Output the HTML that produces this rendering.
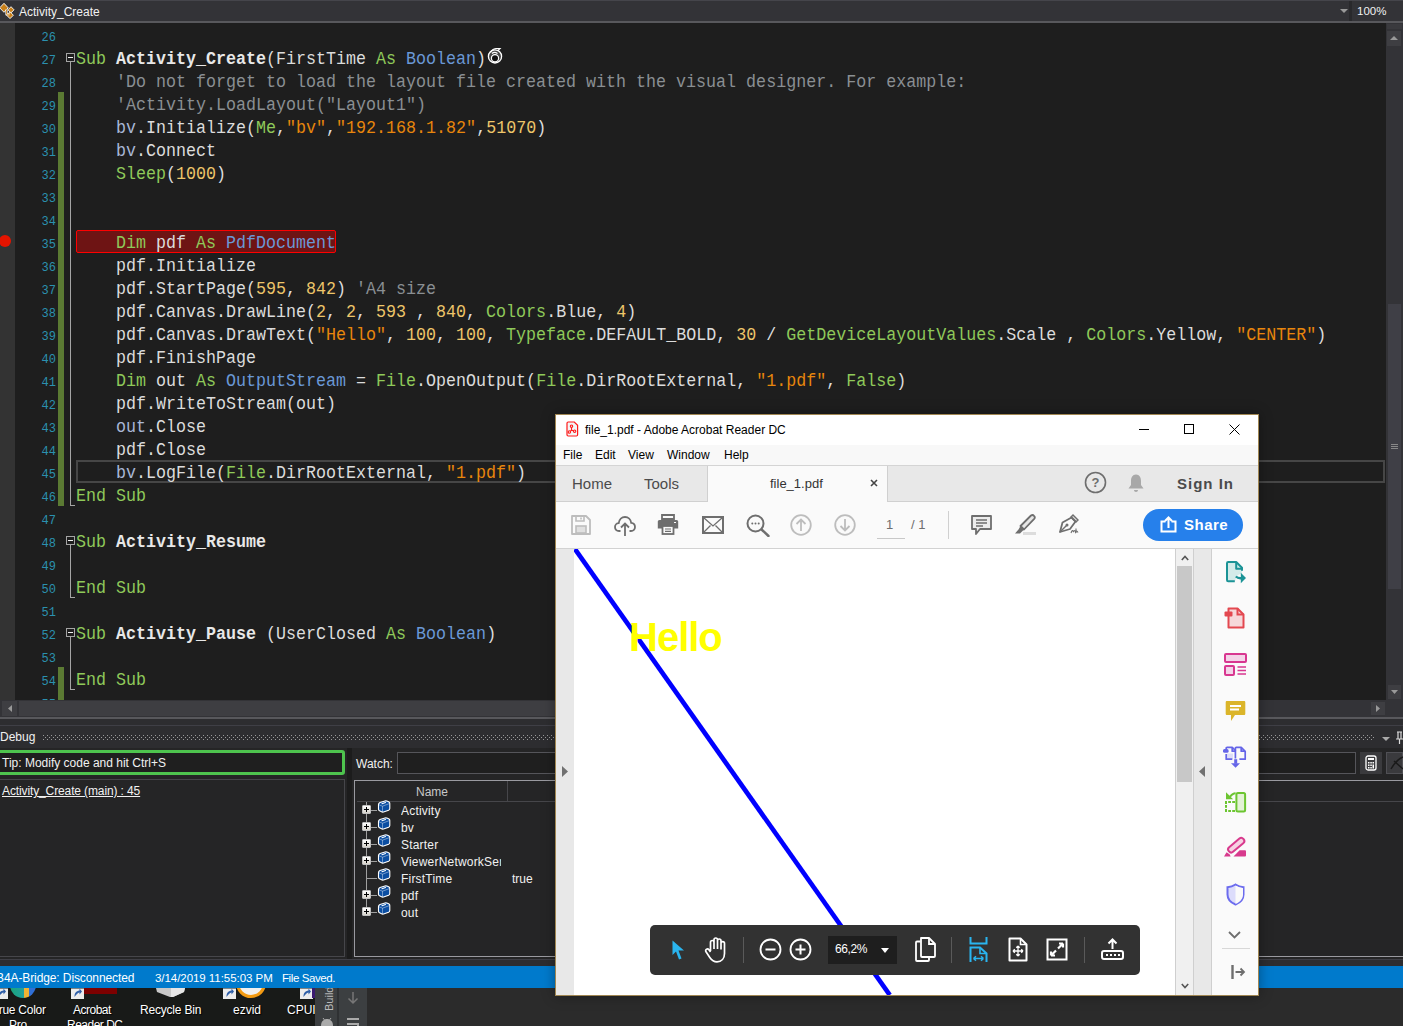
<!DOCTYPE html>
<html><head><meta charset="utf-8">
<style>
*{margin:0;padding:0;box-sizing:border-box}
html,body{width:1403px;height:1026px;overflow:hidden;background:#2b2b2b;font-family:"Liberation Sans",sans-serif;font-size:12px;color:#f1f1f1}
.a{position:absolute}
#title{left:0;top:0;width:1403px;height:23px;background:#333337}
#editor{left:0;top:23px;width:1386px;height:677px;background:#1e1e1e;overflow:hidden}
.ln{position:absolute;left:16px;width:40px;text-align:right;font-family:"Liberation Mono",monospace;font-size:12px;color:#2b91af;height:23px;line-height:23px;padding-top:4px}
.cl{position:absolute;left:76px;font-family:"Liberation Mono",monospace;font-size:18px;transform:scaleX(0.92593);transform-origin:0 0;color:#dcdcdc;white-space:pre;height:23px;line-height:23px;padding-top:2px}
.k{color:#8fc95a}.b{font-weight:bold;color:#e8e8e8}.v{color:#a9b7d6}.t{color:#6a98d6}.s{color:#e8860c}.n{color:#eec66a}.c{color:#8a8f93}
</style></head><body>
<!-- title bar -->
<div id="title" class="a">
 <div class="a" style="left:0;top:0;width:1403px;height:1px;background:#45454b"></div>
 <div class="a" style="left:0;top:21px;width:1403px;height:2px;background:#58585c"></div>
 <svg class="a" style="left:0;top:0" width="16" height="22" viewBox="0 0 16 22"><g fill="#c8801a" stroke="#fff" stroke-width="0.9" stroke-linejoin="miter"><path d="M4 3.3L8.2 7.8L4 12.3L-0.3 7.8Z"/><path d="M11 6.7L14 9.8L11 12.9L8 9.8Z"/><path d="M10 11.8L13.4 15.2L10 18.6L6.6 15.2Z"/></g><path d="M6.5 9.5V14.2H9.5" fill="none" stroke="#fff" stroke-width="2.2"/><path d="M6.5 9.5V14.2H9.5" fill="none" stroke="#c8801a" stroke-width="0.9"/></svg>
 <div class="a" style="left:19px;top:5px;font-size:12px;color:#f1f1f1">Activity_Create</div>
 <svg class="a" style="left:1340px;top:9px" width="8" height="4"><path d="M0 0H8L4 4Z" fill="#999"/></svg>
 <div class="a" style="left:1349px;top:1px;width:3px;height:20px;background:#29292c"></div>
 <div class="a" style="left:1357px;top:5px;font-size:11.5px;color:#f1f1f1">100%</div>
</div>
<!-- editor -->
<div id="editor" class="a">
 <div class="a" style="left:0;top:0;width:15px;height:677px;background:#333333"></div>
 <!-- change bars -->
 <div class="a" style="left:58px;top:69px;width:6px;height:414px;background:#5b7a33"></div>
 <div class="a" style="left:58px;top:644px;width:6px;height:40px;background:#5b7a33"></div>
 <!-- fold markers -->
 <div class="a" style="left:66px;top:30px;width:9px;height:9px;border:1px solid #a5a5a5"></div>
 <div class="a" style="left:68px;top:34px;width:5px;height:1px;background:#f0f0f0"></div>
 <div class="a" style="left:70px;top:39px;width:1px;height:443px;background:#a5a5a5"></div>
 <div class="a" style="left:70px;top:482px;width:5px;height:1px;background:#a5a5a5"></div>
 <div class="a" style="left:66px;top:513px;width:9px;height:9px;border:1px solid #a5a5a5"></div>
 <div class="a" style="left:68px;top:517px;width:5px;height:1px;background:#f0f0f0"></div>
 <div class="a" style="left:70px;top:522px;width:1px;height:52px;background:#a5a5a5"></div>
 <div class="a" style="left:70px;top:574px;width:5px;height:1px;background:#a5a5a5"></div>
 <div class="a" style="left:66px;top:605px;width:9px;height:9px;border:1px solid #a5a5a5"></div>
 <div class="a" style="left:68px;top:609px;width:5px;height:1px;background:#f0f0f0"></div>
 <div class="a" style="left:70px;top:614px;width:1px;height:52px;background:#a5a5a5"></div>
 <div class="a" style="left:70px;top:666px;width:5px;height:1px;background:#a5a5a5"></div>
 <!-- breakpoint -->
 <div class="a" style="left:-1px;top:212px;width:12px;height:12px;border-radius:50%;background:#e51400"></div>
 <div class="a" style="left:76px;top:207px;width:260px;height:23px;background:#6e1414;border:1px solid #ff0000;border-radius:2px"></div>
 <!-- current line -->
 <div class="a" style="left:76px;top:437px;width:1309px;height:23px;border:2px solid #464646"></div>
<div class="ln" style="top:0px">26</div>
<div class="ln" style="top:23px">27</div>
<div class="cl" style="top:23px"><span class="k">Sub</span> <span class="b">Activity_Create</span>(FirstTime <span class="k">As</span> <span class="t">Boolean</span>)</div>
<div class="ln" style="top:46px">28</div>
<div class="cl" style="top:46px">    <span class="c">&#x27;Do not forget to load the layout file created with the visual designer. For example:</span></div>
<div class="ln" style="top:69px">29</div>
<div class="cl" style="top:69px">    <span class="c">&#x27;Activity.LoadLayout(&quot;Layout1&quot;)</span></div>
<div class="ln" style="top:92px">30</div>
<div class="cl" style="top:92px">    <span class="v">bv</span>.Initialize(<span class="k">Me</span>,<span class="s">&quot;bv&quot;</span>,<span class="s">&quot;192.168.1.82&quot;</span>,<span class="n">51070</span>)</div>
<div class="ln" style="top:115px">31</div>
<div class="cl" style="top:115px">    <span class="v">bv</span>.Connect</div>
<div class="ln" style="top:138px">32</div>
<div class="cl" style="top:138px">    <span class="k">Sleep</span>(<span class="n">1000</span>)</div>
<div class="ln" style="top:161px">33</div>
<div class="ln" style="top:184px">34</div>
<div class="ln" style="top:207px">35</div>
<div class="cl" style="top:207px">    <span class="k">Dim</span> pdf <span class="k">As</span> <span class="t">PdfDocument</span></div>
<div class="ln" style="top:230px">36</div>
<div class="cl" style="top:230px">    pdf.Initialize</div>
<div class="ln" style="top:253px">37</div>
<div class="cl" style="top:253px">    pdf.StartPage(<span class="n">595</span>, <span class="n">842</span>) <span class="c">&#x27;A4 size</span></div>
<div class="ln" style="top:276px">38</div>
<div class="cl" style="top:276px">    pdf.Canvas.DrawLine(<span class="n">2</span>, <span class="n">2</span>, <span class="n">593</span> , <span class="n">840</span>, <span class="k">Colors</span>.Blue, <span class="n">4</span>)</div>
<div class="ln" style="top:299px">39</div>
<div class="cl" style="top:299px">    pdf.Canvas.DrawText(<span class="s">&quot;Hello&quot;</span>, <span class="n">100</span>, <span class="n">100</span>, <span class="k">Typeface</span>.DEFAULT_BOLD, <span class="n">30</span> / <span class="k">GetDeviceLayoutValues</span>.Scale , <span class="k">Colors</span>.Yellow, <span class="s">&quot;CENTER&quot;</span>)</div>
<div class="ln" style="top:322px">40</div>
<div class="cl" style="top:322px">    pdf.FinishPage</div>
<div class="ln" style="top:345px">41</div>
<div class="cl" style="top:345px">    <span class="k">Dim</span> out <span class="k">As</span> <span class="t">OutputStream</span> = <span class="k">File</span>.OpenOutput(<span class="k">File</span>.DirRootExternal, <span class="s">&quot;1.pdf&quot;</span>, <span class="k">False</span>)</div>
<div class="ln" style="top:368px">42</div>
<div class="cl" style="top:368px">    pdf.WriteToStream(out)</div>
<div class="ln" style="top:391px">43</div>
<div class="cl" style="top:391px">    <span class="v">out</span>.Close</div>
<div class="ln" style="top:414px">44</div>
<div class="cl" style="top:414px">    pdf.Close</div>
<div class="ln" style="top:437px">45</div>
<div class="cl" style="top:437px">    <span class="v">bv</span>.LogFile(<span class="k">File</span>.DirRootExternal, <span class="s">&quot;1.pdf&quot;</span>)</div>
<div class="ln" style="top:460px">46</div>
<div class="cl" style="top:460px"><span class="k">End Sub</span></div>
<div class="ln" style="top:483px">47</div>
<div class="ln" style="top:506px">48</div>
<div class="cl" style="top:506px"><span class="k">Sub</span> <span class="b">Activity_Resume</span></div>
<div class="ln" style="top:529px">49</div>
<div class="ln" style="top:552px">50</div>
<div class="cl" style="top:552px"><span class="k">End Sub</span></div>
<div class="ln" style="top:575px">51</div>
<div class="ln" style="top:598px">52</div>
<div class="cl" style="top:598px"><span class="k">Sub</span> <span class="b">Activity_Pause</span> (UserClosed <span class="k">As</span> <span class="t">Boolean</span>)</div>
<div class="ln" style="top:621px">53</div>
<div class="ln" style="top:644px">54</div>
<div class="cl" style="top:644px"><span class="k">End Sub</span></div>
<div class="ln" style="top:667px">55</div>
 <!-- timer icon after line 27 -->
 <svg class="a" style="left:486px;top:23px" width="18" height="20" viewBox="0 0 18 20"><circle cx="9" cy="10.4" r="6.6" fill="#474747" stroke="#fff" stroke-width="1.3"/><circle cx="9" cy="12.2" r="3.6" fill="#111" stroke="#fff" stroke-width="1.2"/><path d="M4.5 6.5C5.5 4 7 3 10 2.5H14L12 4.5M6 7.5C7.5 6 9.5 6 11.5 7.5" fill="none" stroke="#fff" stroke-width="1.2"/></svg>
</div>
<!-- vertical scrollbar -->
<div class="a" style="left:1386px;top:23px;width:17px;height:677px;background:#333337">
 <div class="a" style="left:1px;top:1px;width:15px;height:5px;background:#3a3a3e"></div>
 <div class="a" style="left:1px;top:8px;width:14px;height:15px;background:#3e3e42"></div>
 <svg class="a" style="left:4px;top:13px" width="8" height="4"><path d="M0 4H8L4 0Z" fill="#999"/></svg>
 <div class="a" style="left:2px;top:281px;width:13px;height:285px;background:#3f3f46"></div>
 <div class="a" style="left:5px;top:421px;width:7px;height:1px;background:#888"></div>
 <div class="a" style="left:5px;top:423px;width:7px;height:1px;background:#888"></div>
 <div class="a" style="left:5px;top:425px;width:7px;height:1px;background:#888"></div>
 <div class="a" style="left:2px;top:662px;width:13px;height:14px;background:#3e3e42"></div>
 <svg class="a" style="left:5px;top:667px" width="7" height="4"><path d="M0 0H7L3.5 4Z" fill="#999"/></svg>
</div>
<!-- horizontal scrollbar -->
<div class="a" style="left:0;top:700px;width:1403px;height:17px;background:#333337">
 <div class="a" style="left:2px;top:1px;width:15px;height:15px;background:#3e3e42"></div>
 <div class="a" style="left:19px;top:1px;width:1080px;height:15px;background:#3e3e42"></div>
 <svg class="a" style="left:8px;top:5px" width="4" height="7"><path d="M4 0V7L0 3.5Z" fill="#999"/></svg>
 <div class="a" style="left:1371px;top:2px;width:14px;height:13px;background:#3e3e42"></div>
 <svg class="a" style="left:1376px;top:5px" width="4" height="7"><path d="M0 0V7L4 3.5Z" fill="#999"/></svg>
</div>
<!-- debug panel -->
<div class="a" style="left:0;top:717px;width:1403px;height:249px;background:#2d2d30"></div>
<div class="a" style="left:0;top:717px;width:1403px;height:2px;background:#58585c"></div>
<div class="a" style="left:0;top:725px;width:1403px;height:1px;background:#3f3f46"></div>
<div class="a" style="left:0;top:730px;font-size:12px;color:#f1f1f1">Debug</div>
<svg class="a" style="left:43px;top:735px" width="1332" height="5"><defs><pattern id="dots" x="0" y="0" width="4" height="4" patternUnits="userSpaceOnUse"><rect x="0" y="0" width="1" height="1" fill="#9a9a9a"/><rect x="2" y="2" width="1" height="1" fill="#9a9a9a"/></pattern></defs><rect width="1332" height="5" fill="url(#dots)"/></svg>
<svg class="a" style="left:1382px;top:737px" width="8" height="4"><path d="M0 0H8L4 4Z" fill="#aaa"/></svg>
<svg class="a" style="left:1396px;top:731px" width="7" height="13"><path d="M1 1H6M2 1V8H5V1M0 8H7M3.5 8V13" stroke="#ddd" stroke-width="1.2" fill="none"/></svg>
<div class="a" style="left:0;top:748px;width:1403px;height:211px;background:#252526"></div>
<!-- tip box -->
<div class="a" style="left:-3px;top:750px;width:348px;height:25px;border:3px solid #4ec44e;border-radius:3px;background:#1f1f1f"></div>
<div class="a" style="left:2px;top:756px;font-size:12px;color:#f1f1f1">Tip: Modify code and hit Ctrl+S</div>
<!-- call stack -->
<div class="a" style="left:-1px;top:779px;width:346px;height:178px;border:1px solid #46464a"></div>
<div class="a" style="left:2px;top:784px;font-size:12px;color:#f1f1f1;text-decoration:underline;letter-spacing:-0.12px">Activity_Create (main) : 45</div>
<!-- splitter -->
<div class="a" style="left:347px;top:748px;width:5px;height:211px;background:#1c1c1c"></div>
<!-- watch -->
<div class="a" style="left:356px;top:757px;font-size:12px;color:#f1f1f1">Watch:</div>
<div class="a" style="left:397px;top:752px;width:959px;height:22px;border:1px solid #55555a;background:#1f1f1f"></div>
<div class="a" style="left:1360px;top:752px;width:22px;height:22px;background:#3a3a3d"></div>
<svg class="a" style="left:1365px;top:755px" width="12" height="16" viewBox="0 0 12 16"><rect x="1" y="1" width="10" height="14" rx="2" fill="none" stroke="#fff" stroke-width="1.3"/><rect x="3" y="3" width="6" height="2" fill="#fff"/><g fill="#fff"><rect x="3" y="7" width="1.5" height="1.5"/><rect x="5.3" y="7" width="1.5" height="1.5"/><rect x="7.5" y="7" width="1.5" height="1.5"/><rect x="3" y="9.5" width="1.5" height="1.5"/><rect x="5.3" y="9.5" width="1.5" height="1.5"/><rect x="7.5" y="9.5" width="1.5" height="4"/><rect x="3" y="12" width="1.5" height="1.5"/><rect x="5.3" y="12" width="1.5" height="1.5"/></g></svg>
<div class="a" style="left:1386px;top:752px;width:17px;height:22px;background:#3a3a3d;border:1px solid #505055"></div>
<svg class="a" style="left:1390px;top:756px" width="13" height="14"><path d="M1 13 Q6 4 13 1 M4 5 L13 13" stroke="#1a1a1a" stroke-width="1.5" fill="none"/></svg>
<!-- tree -->
<div class="a" style="left:354px;top:780px;width:1060px;height:177px;border:1px solid #9a9aa0;border-right:none"></div>
<div class="a" style="left:357px;top:801px;width:1046px;height:1px;background:#46464a"></div>
<div class="a" style="left:507px;top:781px;width:1px;height:20px;background:#46464a"></div>
<div class="a" style="left:416px;top:785px;font-size:12px;color:#c8c8c8">Name</div>
<div class="a" style="left:366px;top:802px;width:1px;height:110px;background:#a0a0a0"></div>
<div class="a" style="left:366px;top:810px;width:11px;height:1px;background:#a0a0a0"></div>
<div class="a" style="left:362px;top:805px;width:9px;height:9px;background:linear-gradient(#fff,#d8d4cc);border:1px solid #c0c0c0;border-radius:1px"></div>
<div class="a" style="left:364px;top:809px;width:5px;height:1px;background:#000"></div>
<div class="a" style="left:366px;top:807px;width:1px;height:5px;background:#000"></div>
<svg class="a" style="left:377px;top:800px" width="14" height="13" viewBox="0 0 14 13"><path d="M1.5 4.5C1.5 3.5 2 3 3 2.5L8 1C9 0.7 9.5 0.8 10.5 1.2L12 2C12.6 2.4 12.8 2.8 12.8 3.5V8.5C12.8 9.3 12.4 9.8 11.6 10.2L6.5 12C5.8 12.2 5.2 12.2 4.5 11.8L2.6 10.8C1.9 10.4 1.5 9.9 1.5 9.2Z" fill="#0b4ea2" stroke="#fff" stroke-width="1.1"/><path d="M2 4.8L5.5 6.2L12.5 3.5M5.5 6.2V12" fill="none" stroke="#fff" stroke-width="0.7" opacity="0.6"/><path d="M5 3.8L8.5 2.6" stroke="#fff" stroke-width="1.1" stroke-linecap="round"/></svg>
<div class="a" style="left:401px;top:804px;font-size:12px;color:#f1f1f1;white-space:pre;width:100px;overflow:hidden;letter-spacing:0.2px">Activity</div>
<div class="a" style="left:366px;top:827px;width:11px;height:1px;background:#a0a0a0"></div>
<div class="a" style="left:362px;top:822px;width:9px;height:9px;background:linear-gradient(#fff,#d8d4cc);border:1px solid #c0c0c0;border-radius:1px"></div>
<div class="a" style="left:364px;top:826px;width:5px;height:1px;background:#000"></div>
<div class="a" style="left:366px;top:824px;width:1px;height:5px;background:#000"></div>
<svg class="a" style="left:377px;top:817px" width="14" height="13" viewBox="0 0 14 13"><path d="M1.5 4.5C1.5 3.5 2 3 3 2.5L8 1C9 0.7 9.5 0.8 10.5 1.2L12 2C12.6 2.4 12.8 2.8 12.8 3.5V8.5C12.8 9.3 12.4 9.8 11.6 10.2L6.5 12C5.8 12.2 5.2 12.2 4.5 11.8L2.6 10.8C1.9 10.4 1.5 9.9 1.5 9.2Z" fill="#0b4ea2" stroke="#fff" stroke-width="1.1"/><path d="M2 4.8L5.5 6.2L12.5 3.5M5.5 6.2V12" fill="none" stroke="#fff" stroke-width="0.7" opacity="0.6"/><path d="M5 3.8L8.5 2.6" stroke="#fff" stroke-width="1.1" stroke-linecap="round"/></svg>
<div class="a" style="left:401px;top:821px;font-size:12px;color:#f1f1f1;white-space:pre;width:100px;overflow:hidden;letter-spacing:0.2px">bv</div>
<div class="a" style="left:366px;top:844px;width:11px;height:1px;background:#a0a0a0"></div>
<div class="a" style="left:362px;top:839px;width:9px;height:9px;background:linear-gradient(#fff,#d8d4cc);border:1px solid #c0c0c0;border-radius:1px"></div>
<div class="a" style="left:364px;top:843px;width:5px;height:1px;background:#000"></div>
<div class="a" style="left:366px;top:841px;width:1px;height:5px;background:#000"></div>
<svg class="a" style="left:377px;top:834px" width="14" height="13" viewBox="0 0 14 13"><path d="M1.5 4.5C1.5 3.5 2 3 3 2.5L8 1C9 0.7 9.5 0.8 10.5 1.2L12 2C12.6 2.4 12.8 2.8 12.8 3.5V8.5C12.8 9.3 12.4 9.8 11.6 10.2L6.5 12C5.8 12.2 5.2 12.2 4.5 11.8L2.6 10.8C1.9 10.4 1.5 9.9 1.5 9.2Z" fill="#0b4ea2" stroke="#fff" stroke-width="1.1"/><path d="M2 4.8L5.5 6.2L12.5 3.5M5.5 6.2V12" fill="none" stroke="#fff" stroke-width="0.7" opacity="0.6"/><path d="M5 3.8L8.5 2.6" stroke="#fff" stroke-width="1.1" stroke-linecap="round"/></svg>
<div class="a" style="left:401px;top:838px;font-size:12px;color:#f1f1f1;white-space:pre;width:100px;overflow:hidden;letter-spacing:0.2px">Starter</div>
<div class="a" style="left:366px;top:861px;width:11px;height:1px;background:#a0a0a0"></div>
<div class="a" style="left:362px;top:856px;width:9px;height:9px;background:linear-gradient(#fff,#d8d4cc);border:1px solid #c0c0c0;border-radius:1px"></div>
<div class="a" style="left:364px;top:860px;width:5px;height:1px;background:#000"></div>
<div class="a" style="left:366px;top:858px;width:1px;height:5px;background:#000"></div>
<svg class="a" style="left:377px;top:851px" width="14" height="13" viewBox="0 0 14 13"><path d="M1.5 4.5C1.5 3.5 2 3 3 2.5L8 1C9 0.7 9.5 0.8 10.5 1.2L12 2C12.6 2.4 12.8 2.8 12.8 3.5V8.5C12.8 9.3 12.4 9.8 11.6 10.2L6.5 12C5.8 12.2 5.2 12.2 4.5 11.8L2.6 10.8C1.9 10.4 1.5 9.9 1.5 9.2Z" fill="#0b4ea2" stroke="#fff" stroke-width="1.1"/><path d="M2 4.8L5.5 6.2L12.5 3.5M5.5 6.2V12" fill="none" stroke="#fff" stroke-width="0.7" opacity="0.6"/><path d="M5 3.8L8.5 2.6" stroke="#fff" stroke-width="1.1" stroke-linecap="round"/></svg>
<div class="a" style="left:401px;top:855px;font-size:12px;color:#f1f1f1;white-space:pre;width:100px;overflow:hidden;letter-spacing:0.2px">ViewerNetworkSen</div>
<div class="a" style="left:366px;top:878px;width:11px;height:1px;background:#a0a0a0"></div>
<svg class="a" style="left:377px;top:868px" width="14" height="13" viewBox="0 0 14 13"><path d="M1.5 4.5C1.5 3.5 2 3 3 2.5L8 1C9 0.7 9.5 0.8 10.5 1.2L12 2C12.6 2.4 12.8 2.8 12.8 3.5V8.5C12.8 9.3 12.4 9.8 11.6 10.2L6.5 12C5.8 12.2 5.2 12.2 4.5 11.8L2.6 10.8C1.9 10.4 1.5 9.9 1.5 9.2Z" fill="#0b4ea2" stroke="#fff" stroke-width="1.1"/><path d="M2 4.8L5.5 6.2L12.5 3.5M5.5 6.2V12" fill="none" stroke="#fff" stroke-width="0.7" opacity="0.6"/><path d="M5 3.8L8.5 2.6" stroke="#fff" stroke-width="1.1" stroke-linecap="round"/></svg>
<div class="a" style="left:401px;top:872px;font-size:12px;color:#f1f1f1;white-space:pre;width:100px;overflow:hidden;letter-spacing:0.2px">FirstTime</div>
<div class="a" style="left:512px;top:872px;font-size:12px;color:#f1f1f1">true</div>
<div class="a" style="left:366px;top:895px;width:11px;height:1px;background:#a0a0a0"></div>
<div class="a" style="left:362px;top:890px;width:9px;height:9px;background:linear-gradient(#fff,#d8d4cc);border:1px solid #c0c0c0;border-radius:1px"></div>
<div class="a" style="left:364px;top:894px;width:5px;height:1px;background:#000"></div>
<div class="a" style="left:366px;top:892px;width:1px;height:5px;background:#000"></div>
<svg class="a" style="left:377px;top:885px" width="14" height="13" viewBox="0 0 14 13"><path d="M1.5 4.5C1.5 3.5 2 3 3 2.5L8 1C9 0.7 9.5 0.8 10.5 1.2L12 2C12.6 2.4 12.8 2.8 12.8 3.5V8.5C12.8 9.3 12.4 9.8 11.6 10.2L6.5 12C5.8 12.2 5.2 12.2 4.5 11.8L2.6 10.8C1.9 10.4 1.5 9.9 1.5 9.2Z" fill="#0b4ea2" stroke="#fff" stroke-width="1.1"/><path d="M2 4.8L5.5 6.2L12.5 3.5M5.5 6.2V12" fill="none" stroke="#fff" stroke-width="0.7" opacity="0.6"/><path d="M5 3.8L8.5 2.6" stroke="#fff" stroke-width="1.1" stroke-linecap="round"/></svg>
<div class="a" style="left:401px;top:889px;font-size:12px;color:#f1f1f1;white-space:pre;width:100px;overflow:hidden;letter-spacing:0.2px">pdf</div>
<div class="a" style="left:366px;top:912px;width:11px;height:1px;background:#a0a0a0"></div>
<div class="a" style="left:362px;top:907px;width:9px;height:9px;background:linear-gradient(#fff,#d8d4cc);border:1px solid #c0c0c0;border-radius:1px"></div>
<div class="a" style="left:364px;top:911px;width:5px;height:1px;background:#000"></div>
<div class="a" style="left:366px;top:909px;width:1px;height:5px;background:#000"></div>
<svg class="a" style="left:377px;top:902px" width="14" height="13" viewBox="0 0 14 13"><path d="M1.5 4.5C1.5 3.5 2 3 3 2.5L8 1C9 0.7 9.5 0.8 10.5 1.2L12 2C12.6 2.4 12.8 2.8 12.8 3.5V8.5C12.8 9.3 12.4 9.8 11.6 10.2L6.5 12C5.8 12.2 5.2 12.2 4.5 11.8L2.6 10.8C1.9 10.4 1.5 9.9 1.5 9.2Z" fill="#0b4ea2" stroke="#fff" stroke-width="1.1"/><path d="M2 4.8L5.5 6.2L12.5 3.5M5.5 6.2V12" fill="none" stroke="#fff" stroke-width="0.7" opacity="0.6"/><path d="M5 3.8L8.5 2.6" stroke="#fff" stroke-width="1.1" stroke-linecap="round"/></svg>
<div class="a" style="left:401px;top:906px;font-size:12px;color:#f1f1f1;white-space:pre;width:100px;overflow:hidden;letter-spacing:0.2px">out</div>
<!-- bottom -->
<div class="a" style="left:0;top:959px;width:1403px;height:1px;background:#3f3f46"></div>
<!-- desktop -->
<div class="a" style="left:0;top:988px;width:315px;height:38px;background:#181a18;overflow:hidden">
<div class="a" style="left:-8px;top:15px;font-size:12px;color:#fff;white-space:pre;letter-spacing:-0.25px;text-shadow:1px 1px 1px #000">True Color</div>
<div class="a" style="left:9px;top:30px;font-size:12px;color:#fff;white-space:pre;letter-spacing:-0.25px;text-shadow:1px 1px 1px #000">Pro</div>
<div class="a" style="left:73px;top:15px;font-size:12px;color:#fff;white-space:pre;letter-spacing:-0.5px;text-shadow:1px 1px 1px #000">Acrobat</div>
<div class="a" style="left:67px;top:30px;font-size:12px;color:#fff;white-space:pre;letter-spacing:-0.5px;text-shadow:1px 1px 1px #000">Reader DC</div>
<div class="a" style="left:140px;top:15px;font-size:12px;color:#fff;white-space:pre;letter-spacing:-0.2px;text-shadow:1px 1px 1px #000">Recycle Bin</div>
<div class="a" style="left:233px;top:15px;font-size:12px;color:#fff;white-space:pre;letter-spacing:0px;text-shadow:1px 1px 1px #000">ezvid</div>
<div class="a" style="left:287px;top:15px;font-size:12px;color:#fff;white-space:pre;letter-spacing:0px;text-shadow:1px 1px 1px #000">CPUID</div>
<svg class="a" style="left:-5px;top:0" width="13" height="11" viewBox="0 0 13 11"><rect x="0" y="0.5" width="13" height="10.5" fill="#ececec"/><path d="M3.5 9C3.5 5 5 3 8.5 2.5V0.5L11 3.5L8.5 6.5V4.5C6.5 5 5.5 6.5 3.5 9Z" fill="#2f5fa8"/></svg>
<div class="a" style="left:10px;top:-6px;width:26px;height:16px;border-radius:0 0 13px 13px;background:linear-gradient(90deg,#1aa57a 0,#22a0a0 55%,#f2b233 55%,#f2b233 75%,#2f6fd6 75%)"></div>
<svg class="a" style="left:71px;top:0" width="13" height="11" viewBox="0 0 13 11"><rect x="0" y="0.5" width="13" height="10.5" fill="#ececec"/><path d="M3.5 9C3.5 5 5 3 8.5 2.5V0.5L11 3.5L8.5 6.5V4.5C6.5 5 5.5 6.5 3.5 9Z" fill="#2f5fa8"/></svg>
<div class="a" style="left:84px;top:0;width:33px;height:6px;background:#7d0000"></div>
<svg class="a" style="left:155px;top:0" width="31" height="10"><path d="M1 0H30L29 4L18 9H15L2 4Z" fill="#c8c8c8"/><path d="M16 0H30L29 4L18 9H16Z" fill="#e6e6e6"/></svg>
<svg class="a" style="left:223px;top:0" width="13" height="11" viewBox="0 0 13 11"><rect x="0" y="0.5" width="13" height="10.5" fill="#ececec"/><path d="M3.5 9C3.5 5 5 3 8.5 2.5V0.5L11 3.5L8.5 6.5V4.5C6.5 5 5.5 6.5 3.5 9Z" fill="#2f5fa8"/></svg>
<svg class="a" style="left:235px;top:-6px" width="32" height="17"><circle cx="16" cy="1" r="13.5" fill="#f0f0f0" stroke="#f29a12" stroke-width="3.2"/></svg>
<svg class="a" style="left:300px;top:0" width="13" height="11" viewBox="0 0 13 11"><rect x="0" y="0.5" width="13" height="10.5" fill="#ececec"/><path d="M3.5 9C3.5 5 5 3 8.5 2.5V0.5L11 3.5L8.5 6.5V4.5C6.5 5 5.5 6.5 3.5 9Z" fill="#2f5fa8"/></svg>
<div class="a" style="left:312px;top:0;width:3px;height:10px;background:#3b1b70"></div>
</div>
<div class="a" style="left:315px;top:988px;width:22px;height:38px;background:#3c3f41"></div>
<div class="a" style="left:337px;top:988px;width:2px;height:38px;background:#2f3133"></div>
<div class="a" style="left:339px;top:988px;width:28px;height:38px;background:#3c3f41"></div>
<div class="a" style="left:367px;top:988px;width:1036px;height:38px;background:#2b2b2b"></div>
<div class="a" style="font-size:11px;color:#bbbbbb;transform:rotate(-90deg);transform-origin:0 0;top:1011px;left:323px;white-space:pre">Build</div>
<svg class="a" style="left:346px;top:991px" width="14" height="14"><path d="M7 1V12M2.5 7.5L7 12L11.5 7.5" fill="none" stroke="#777" stroke-width="1.5"/></svg>
<svg class="a" style="left:320px;top:1017px" width="14" height="9"><path d="M1 9C1 4 4 2 7 2S13 4 13 9Z" fill="#aaa"/><path d="M3 1L4.5 3M11 1L9.5 3" stroke="#aaa" stroke-width="1"/></svg>
<div class="a" style="left:347px;top:1018px;width:12px;height:2px;background:#aaa"></div>
<div class="a" style="left:347px;top:1023px;width:12px;height:3px;border:2px solid #aaa;border-bottom:none;border-left:none"></div>
<!-- status bar -->
<div class="a" style="left:0;top:966px;width:1403px;height:22px;background:#007acc"></div>
<div class="a" style="left:-4px;top:971px;font-size:12px;color:#fff;white-space:pre;letter-spacing:-0.1px">B4A-Bridge: Disconnected</div>
<div class="a" style="left:155px;top:972px;font-size:11.5px;color:#fff;white-space:pre;letter-spacing:-0.05px">3/14/2019 11:55:03 PM</div>
<div class="a" style="left:282px;top:972px;font-size:11.5px;color:#fff;white-space:pre;letter-spacing:-0.4px">File Saved.</div>

<!-- acrobat window -->
<div class="a" style="left:555px;top:414px;width:704px;height:582px;background:#fafafa;border:1px solid #a08652;overflow:hidden;box-shadow:0 0 12px rgba(0,0,0,0.35)">
 <!-- title bar (coords relative to inner 556,415) -->
 <div class="a" style="left:0;top:0;width:702px;height:30px;background:#ffffff"></div>
 <svg class="a" style="left:10px;top:6px" width="13" height="16" viewBox="0 0 13 16"><path d="M1 2.2Q1 1 2.2 1H8.3L11.6 4.3V13.8Q11.6 15 10.4 15H2.2Q1 15 1 13.8Z" fill="#f2f6f6" stroke="#ff1a1a" stroke-width="1.2"/><g fill="none" stroke="#ff1a1a" stroke-width="1.1"><circle cx="5.5" cy="5.2" r="1.2"/><circle cx="3.4" cy="11" r="1.2"/><circle cx="8.6" cy="10.2" r="1.2"/><path d="M5.5 6.4V8.8M4.3 10.3L5.5 9.2L7.4 9.8"/></g></svg>
 <div class="a" style="left:29px;top:8px;font-size:12px;color:#000">file_1.pdf - Adobe Acrobat Reader DC</div>
 <div class="a" style="left:583px;top:14px;width:10px;height:1px;background:#000"></div>
 <div class="a" style="left:628px;top:9px;width:10px;height:10px;border:1px solid #000"></div>
 <svg class="a" style="left:673px;top:9px" width="11" height="11"><path d="M0.5 0.5L10.5 10.5M10.5 0.5L0.5 10.5" stroke="#000" stroke-width="1"/></svg>
 <!-- menu bar -->
 <div class="a" style="left:0;top:30px;width:702px;height:20px;background:#f8f8f8"></div>
 <div class="a" style="left:7px;top:33px;font-size:12px;color:#000;white-space:pre">File</div>
 <div class="a" style="left:39px;top:33px;font-size:12px;color:#000;white-space:pre">Edit</div>
 <div class="a" style="left:72px;top:33px;font-size:12px;color:#000;white-space:pre">View</div>
 <div class="a" style="left:111px;top:33px;font-size:12px;color:#000;white-space:pre">Window</div>
 <div class="a" style="left:168px;top:33px;font-size:12px;color:#000;white-space:pre">Help</div>
 <div class="a" style="left:0;top:50px;width:702px;height:1px;background:#d4d4d4"></div>
 <!-- tab bar -->
 <div class="a" style="left:0;top:51px;width:702px;height:36px;background:#e8e8e8"></div>
 <div class="a" style="left:0;top:86px;width:702px;height:1px;background:#d0d0d0"></div>
 <div class="a" style="left:151px;top:51px;width:181px;height:36px;background:#fafafa;border-left:1px solid #d0d0d0;border-right:1px solid #d0d0d0"></div>
 <div class="a" style="left:16px;top:60px;font-size:15px;color:#4b4b4b">Home</div>
 <div class="a" style="left:88px;top:60px;font-size:15px;color:#4b4b4b">Tools</div>
 <div class="a" style="left:214px;top:61px;font-size:13px;color:#333">file_1.pdf</div>
 <svg class="a" style="left:314px;top:64px" width="8" height="8"><path d="M1 1L7 7M7 1L1 7" stroke="#444" stroke-width="1.6"/></svg>
 <svg class="a" style="left:528px;top:56px" width="23" height="23" viewBox="0 0 23 23"><circle cx="11.5" cy="11.5" r="10" fill="none" stroke="#6e6e6e" stroke-width="1.6"/><text x="11.5" y="16" text-anchor="middle" font-family="Liberation Sans" font-weight="bold" font-size="13" fill="#6e6e6e">?</text></svg>
 <svg class="a" style="left:571px;top:58px" width="18" height="20" viewBox="0 0 18 20"><path d="M9 1.5C5.5 1.5 4 4.5 4 8V12L1.5 15.5H16.5L14 12V8C14 4.5 12.5 1.5 9 1.5Z" fill="#a8a8a8"/><path d="M7 17H11C11 18.2 10.1 19 9 19S7 18.2 7 17Z" fill="#a8a8a8"/></svg>
 <div class="a" style="left:621px;top:60px;font-size:15px;font-weight:bold;color:#4b4b4b;letter-spacing:1px">Sign In</div>
 <!-- toolbar -->
 <div class="a" style="left:0;top:87px;width:702px;height:46px;background:#fafafa"></div>
 <div class="a" style="left:0;top:133px;width:702px;height:1px;background:#d2d2d2"></div>
  <!-- save -->
 <svg class="a" style="left:15px;top:100px" width="20" height="20" viewBox="0 0 20 20"><path d="M1 1H15L19 5V19H1Z" fill="none" stroke="#bdbdbd" stroke-width="1.8" stroke-linejoin="round"/><path d="M5 1.5V6H13V1.5M10 2.5V4.5" fill="none" stroke="#bdbdbd" stroke-width="1.6"/><rect x="5" y="11" width="10" height="7" fill="#e0e0e0" stroke="#bdbdbd" stroke-width="1.6"/></svg>
 <!-- cloud upload -->
 <svg class="a" style="left:58px;top:100px" width="22" height="22" viewBox="0 0 22 22"><path d="M6.5 16H5C2.5 16 1 14.2 1 12C1 9.8 2.7 8.2 4.7 8.2C5.2 4.6 7.8 2 11 2C14.2 2 16.8 4.5 17.2 7.8C19.5 8 21 9.8 21 12C21 14.2 19.3 16 17 16H15.5" fill="none" stroke="#6e6e6e" stroke-width="1.8"/><path d="M11 21V9M7 12.5L11 8.5L15 12.5" fill="none" stroke="#6e6e6e" stroke-width="1.8"/></svg>
 <!-- printer -->
 <svg class="a" style="left:101px;top:99px" width="22" height="21" viewBox="0 0 22 21"><path d="M5 1H17V5H5Z" fill="none" stroke="#6e6e6e" stroke-width="1.8"/><path d="M2.5 6H19.5C20.6 6 21.2 6.7 21.2 7.8V14.5H17V12H5V14.5H0.8V7.8C0.8 6.7 1.4 6 2.5 6Z" fill="#6e6e6e"/><rect x="5.5" y="12" width="11" height="8" fill="none" stroke="#6e6e6e" stroke-width="1.8"/><path d="M8 15H14M8 17.3H14" stroke="#6e6e6e" stroke-width="1.2"/><rect x="17" y="8" width="2" height="1" fill="#fff"/></svg>
 <!-- mail -->
 <svg class="a" style="left:146px;top:101px" width="22" height="18" viewBox="0 0 22 18"><rect x="1" y="1" width="20" height="16" fill="none" stroke="#6e6e6e" stroke-width="2"/><path d="M1.5 1.5L11 10L20.5 1.5M1.5 16.5L8.5 9.5M20.5 16.5L13.5 9.5" fill="none" stroke="#6e6e6e" stroke-width="1.3"/></svg>
 <!-- search -->
 <svg class="a" style="left:190px;top:99px" width="24" height="23" viewBox="0 0 24 23"><circle cx="9.5" cy="9.5" r="8" fill="none" stroke="#6e6e6e" stroke-width="2"/><path d="M15.5 15.5L22.5 22" stroke="#6e6e6e" stroke-width="2.4" stroke-linecap="round"/><circle cx="6.3" cy="9.5" r="1" fill="#6e6e6e"/><circle cx="9.5" cy="9.5" r="1" fill="#6e6e6e"/><circle cx="12.7" cy="9.5" r="1" fill="#6e6e6e"/></svg>
 <!-- up / down -->
 <svg class="a" style="left:234px;top:99px" width="22" height="22" viewBox="0 0 22 22"><circle cx="11" cy="11" r="9.8" fill="none" stroke="#bdbdbd" stroke-width="1.8"/><path d="M11 17V5.5M6.5 10L11 5.5L15.5 10" fill="none" stroke="#bdbdbd" stroke-width="1.8"/></svg>
 <svg class="a" style="left:278px;top:99px" width="22" height="22" viewBox="0 0 22 22"><circle cx="11" cy="11" r="9.8" fill="none" stroke="#bdbdbd" stroke-width="1.8"/><path d="M11 5V16.5M6.5 12L11 16.5L15.5 12" fill="none" stroke="#bdbdbd" stroke-width="1.8"/></svg>
 <div class="a" style="left:330px;top:102px;font-size:13px;color:#6e6e6e">1</div>
 <div class="a" style="left:355px;top:102px;font-size:13px;color:#6e6e6e;white-space:pre">/ 1</div>
 <div class="a" style="left:321px;top:123px;width:28px;height:1px;background:#c8c8c8"></div>
 <div class="a" style="left:392px;top:96px;width:1px;height:28px;background:#d0d0d0"></div>
 <!-- comment -->
 <svg class="a" style="left:415px;top:100px" width="21" height="21" viewBox="0 0 21 21"><path d="M1 1H20V14H9L5 19V14H1Z" fill="#ececec" stroke="#6e6e6e" stroke-width="1.8" stroke-linejoin="round"/><path d="M5 5H16M5 8H16M5 11H12" stroke="#6e6e6e" stroke-width="1.4"/></svg>
 <!-- highlighter -->
 <svg class="a" style="left:458px;top:99px" width="23" height="22" viewBox="0 0 23 22"><path d="M17 1.5C18 0.8 19.3 1 20 1.8C20.8 2.6 21 3.9 20.2 4.8L10 15.5L6.5 12Z" fill="#e6e6e6" stroke="#6e6e6e" stroke-width="1.8" stroke-linejoin="round"/><path d="M6.5 12L4.5 15.5L1 19.5H6L8 17.5L10 15.5Z" fill="#6e6e6e"/><rect x="9" y="18" width="13" height="3" fill="#dcdcdc"/></svg>
 <!-- sign -->
 <svg class="a" style="left:501px;top:98px" width="24" height="23" viewBox="0 0 24 23"><path d="M16 2L21 7L19 9L14 4Z" fill="#dcdcdc" stroke="#6e6e6e" stroke-width="1.4"/><path d="M14.5 4.5L18.5 8.5L13 16L3 19L5.5 9.5Z" fill="none" stroke="#6e6e6e" stroke-width="1.8" stroke-linejoin="round"/><path d="M3 19L9.5 12.5" stroke="#6e6e6e" stroke-width="1.4"/><circle cx="10" cy="12" r="1.5" fill="#6e6e6e"/><path d="M14 20C15 17 16 17 16.5 19C17 17 18 17 18.5 19C19 17.5 20 17.5 21 19.5M19 15.5V20" fill="none" stroke="#6e6e6e" stroke-width="1.1"/></svg>
 <!-- share -->
 <div class="a" style="left:587px;top:94px;width:100px;height:32px;border-radius:16px;background:#2680eb"></div>
 <svg class="a" style="left:604px;top:101px" width="17" height="17" viewBox="0 0 17 17"><path d="M5.5 5.5H1.5V15.5H15.5V5.5H11.5" fill="none" stroke="#fff" stroke-width="2"/><path d="M8.5 12V1.5M5 5L8.5 1.5L12 5" fill="none" stroke="#fff" stroke-width="2"/></svg>
 <div class="a" style="left:628px;top:101px;font-size:15px;font-weight:bold;color:#fff;letter-spacing:0.5px">Share</div>

 <!-- doc area -->
 <div class="a" style="left:0;top:134px;width:18px;height:446px;background:#e8e8e8"></div>
 <svg class="a" style="left:6px;top:351px" width="6" height="11"><path d="M0 0V11L6 5.5Z" fill="#707070"/></svg>
 <div class="a" style="left:18px;top:134px;width:601px;height:446px;background:#ffffff;overflow:hidden">
  <svg class="a" style="left:0;top:0" width="601" height="446"><line x1="0.9" y1="0" x2="315.8" y2="446" stroke="#0000ff" stroke-width="4.7"/></svg>
  <div class="a" style="left:55px;top:68px;font-size:40px;font-weight:bold;color:#ffff00;line-height:1;letter-spacing:-1px">Hello</div>
 </div>
 <div class="a" style="left:619px;top:134px;width:1px;height:446px;background:#cfcfcf"></div>
 <div class="a" style="left:620px;top:134px;width:17px;height:446px;background:#f0f0f0"></div>
 <svg class="a" style="left:625px;top:140px" width="8" height="6"><path d="M0.8 5L4 1.5L7.2 5" stroke="#555" stroke-width="1.6" fill="none"/></svg>
 <div class="a" style="left:621px;top:151px;width:15px;height:216px;background:#c8c8c8"></div>
 <svg class="a" style="left:625px;top:568px" width="8" height="6"><path d="M0.8 1L4 4.5L7.2 1" stroke="#555" stroke-width="1.6" fill="none"/></svg>
 <div class="a" style="left:637px;top:134px;width:1px;height:446px;background:#cfcfcf"></div>
 <div class="a" style="left:638px;top:134px;width:17px;height:446px;background:#e8e8e8"></div>
 <svg class="a" style="left:643px;top:351px" width="6" height="11"><path d="M6 0V11L0 5.5Z" fill="#707070"/></svg>
 <div class="a" style="left:655px;top:134px;width:1px;height:446px;background:#cfcfcf"></div>
 <div class="a" style="left:656px;top:134px;width:46px;height:446px;background:#fafafa"></div>
  <!-- export pdf teal -->
 <svg class="a" style="left:669px;top:145px" width="23" height="25" viewBox="0 0 23 25"><path d="M2 2H11.2L17 7.8V13.5C13.5 14 11 16 10.2 21H2Z" fill="#d3ebe9"/><g fill="none" stroke="#1b9396" stroke-width="2" stroke-linejoin="round"><path d="M9.8 21.2H3.2Q2 21.2 2 20V3.2Q2 2 3.2 2H11.2L17 7.8V10.8"/><path d="M11.2 2.5V8.8H16.8"/><path d="M10.8 16.5Q13 18.6 16.5 18.2" stroke-width="2.3"/></g><path d="M15.8 12.8L21 18L15.8 23.2Z" fill="#1b9396"/></svg>
 <!-- create pdf red -->
 <svg class="a" style="left:668px;top:192px" width="22" height="22" viewBox="0 0 22 22"><path d="M4.5 1.5H13.5L19.5 7.5V20.5H4.5Z" fill="#f6d8da" stroke="#e34850" stroke-width="2" stroke-linejoin="round"/><path d="M13.5 1.5V7.5H19.5" fill="none" stroke="#e34850" stroke-width="2"/><rect x="0.5" y="4.5" width="8" height="5" rx="1" fill="#e34850"/></svg>
 <!-- edit/organize magenta -->
 <svg class="a" style="left:668px;top:238px" width="23" height="23" viewBox="0 0 23 23"><rect x="1" y="1" width="21" height="8" rx="1" fill="#f3d4e8" stroke="#d83790" stroke-width="2"/><rect x="1" y="13" width="9" height="9" rx="1" fill="#f3d4e8" stroke="#d83790" stroke-width="2"/><path d="M13.5 14H22M13.5 17.5H22M13.5 21H22" stroke="#d83790" stroke-width="1.4"/></svg>
 <!-- comment yellow -->
 <svg class="a" style="left:669px;top:285px" width="21" height="22" viewBox="0 0 21 22"><path d="M2 1H19C19.8 1 20.3 1.5 20.3 2.3V13.7C20.3 14.5 19.8 15 19 15H10L6 21V15H2C1.2 15 0.7 14.5 0.7 13.7V2.3C0.7 1.5 1.2 1 2 1Z" fill="#dbb52a"/><path d="M5 6H16M5 9.5H14" stroke="#fff" stroke-width="1.8"/></svg>
 <!-- combine purple -->
 <svg class="a" style="left:667px;top:331px" width="24" height="23" viewBox="0 0 24 23"><rect x="4" y="7.5" width="6" height="5.5" fill="#dedef8"/><g fill="none" stroke="#6565e8" stroke-width="1.7" stroke-linejoin="round"><path d="M3.2 3.5V2.2Q3.2 1.3 4.1 1.3H9.2L12.4 4.5V12.5"/><path d="M9.2 1.5V5.2H12.2"/><path d="M3.2 8V13.2H9.3"/><path d="M12.4 4.5V2.2Q12.4 1.3 13.3 1.3H18.2L22.2 5.3V13.2H16.4"/><path d="M18.2 1.5V5.2H22"/></g><rect x="0" y="3" width="5.6" height="3.8" rx="1.6" fill="#6565e8"/><rect x="11.2" y="13.2" width="3" height="4.5" fill="#6565e8"/><path d="M8 17.2H17L12.6 21.8Z" fill="#6565e8"/></svg>
 <!-- organize green -->
 <svg class="a" style="left:668px;top:376px" width="24" height="23" viewBox="0 0 24 23"><rect x="12.4" y="2" width="8.7" height="18.4" rx="1.5" fill="#e3f2d6" stroke="#6cc531" stroke-width="2"/><g fill="#6cc531"><rect x="1" y="10" width="2" height="3"/><rect x="1" y="14" width="2" height="2.8"/><rect x="1" y="18" width="2" height="3"/><rect x="4.2" y="10" width="2.8" height="2"/><rect x="8.2" y="10" width="2.8" height="2"/><rect x="4.2" y="19" width="2.8" height="2"/><rect x="8.2" y="19" width="2.8" height="2"/><path d="M2 1.2V8.3H9.2L7 6.2C8.3 4.6 9.6 3.6 11.6 3.3V1.2C9.2 1.4 7.2 2.6 5.6 4.7Z"/></g></svg>
 <!-- fill sign pink -->
 <svg class="a" style="left:667px;top:421px" width="24" height="22" viewBox="0 0 24 22"><rect x="-9.5" y="-3" width="19" height="6" rx="2.8" transform="translate(13.2 9.2) rotate(-40)" fill="#f6d2e3" stroke="#d83a8d" stroke-width="2"/><path d="M1 20.5L3.6 16.2L6.8 18.4L7.6 20.5Z" fill="#d83a8d"/><path d="M10.5 20.5L16.6 14.3H22Q23 14.3 23 15.3V19.5Q23 20.5 22 20.5Z" fill="#d83a8d"/></svg>
 <!-- protect shield -->
 <svg class="a" style="left:670px;top:468px" width="19" height="23" viewBox="0 0 19 23"><path d="M9.5 1.5C6.8 3.3 4.3 4 1.5 4.2V11.5C1.5 16 4.5 19.5 9.5 21.5C14.5 19.5 17.5 16 17.5 11.5V4.2C14.7 4 12.2 3.3 9.5 1.5Z" fill="#dcdcfb" stroke="#6c6cee" stroke-width="2"/><path d="M9.5 2V21" stroke="#6c6cee" stroke-width="0"/><path d="M9.5 2.5C12.2 4.2 14.7 4.9 17 5V11.5C17 15.7 14.3 19 9.5 21Z" fill="#fafafa"/></svg>
 <svg class="a" style="left:672px;top:516px" width="13" height="8"><path d="M1 1L6.5 6.5L12 1" fill="none" stroke="#6e6e6e" stroke-width="1.8"/></svg>
 <div class="a" style="left:666px;top:533px;width:28px;height:1px;background:#d8d8d8"></div>
 <svg class="a" style="left:675px;top:550px" width="15" height="14"><path d="M1.5 0V14" stroke="#6e6e6e" stroke-width="2.4"/><path d="M4.5 7H13M9.5 3.5L13 7L9.5 10.5" fill="none" stroke="#6e6e6e" stroke-width="1.8"/></svg>

 <!-- floating toolbar -->
  <div class="a" style="left:94px;top:510px;width:490px;height:50px;border-radius:5px;background:#323232"></div>
 <svg class="a" style="left:116px;top:525px" width="13" height="21" viewBox="0 0 13 21"><path d="M0.5 0.5V15L4 11.5L7 19.5L9.5 18.5L6.5 10.5H12Z" fill="#2ab5ef"/></svg>
 <svg class="a" style="left:148px;top:522px" width="24" height="26" viewBox="0 0 24 26"><path d="M6.5 14V5.5C6.5 4.3 7.3 3.5 8.3 3.5S10 4.3 10 5.5V12M10 12V2.8C10 1.7 10.8 1 11.8 1S13.5 1.7 13.5 2.8V12M13.5 12V3.8C13.5 2.8 14.3 2 15.2 2S17 2.8 17 3.8V12M17 12.5V6.3C17 5.3 17.8 4.6 18.7 4.6S20.5 5.3 20.5 6.3V16.5C20.5 21.5 17.5 24.8 13 24.8C9.5 24.8 7.5 23 5.8 20.5L2 14.8C1.4 13.9 1.6 12.8 2.5 12.3C3.3 11.8 4.3 12 4.9 12.8L6.5 15" fill="none" stroke="#fff" stroke-width="1.7" stroke-linejoin="round"/></svg>
 <div class="a" style="left:187px;top:522px;width:1px;height:26px;background:#5a5a5a"></div>
 <svg class="a" style="left:203px;top:523px" width="23" height="23" viewBox="0 0 23 23"><circle cx="11.5" cy="11.5" r="10" fill="none" stroke="#fff" stroke-width="1.8"/><path d="M6.5 11.5H16.5" stroke="#fff" stroke-width="2"/></svg>
 <svg class="a" style="left:233px;top:523px" width="23" height="23" viewBox="0 0 23 23"><circle cx="11.5" cy="11.5" r="10" fill="none" stroke="#fff" stroke-width="1.8"/><path d="M6.5 11.5H16.5M11.5 6.5V16.5" stroke="#fff" stroke-width="2"/></svg>
 <div class="a" style="left:272px;top:521px;width:69px;height:28px;background:#1e1e1e"></div>
 <div class="a" style="left:279px;top:527px;font-size:12px;color:#fff;letter-spacing:-0.4px">66,2%</div>
 <svg class="a" style="left:325px;top:533px" width="8" height="5"><path d="M0 0H8L4 5Z" fill="#fff"/></svg>
 <svg class="a" style="left:359px;top:522px" width="21" height="25" viewBox="0 0 21 25"><path d="M5.5 4.5H2C1.4 4.5 1 4.9 1 5.5V23C1 23.6 1.4 24 2 24H13C13.6 24 14 23.6 14 23V20" fill="none" stroke="#fff" stroke-width="1.8"/><path d="M6 1H14L20 7V19C20 19.6 19.6 20 19 20H7C6.4 20 6 19.6 6 19Z" fill="none" stroke="#fff" stroke-width="1.8" stroke-linejoin="round"/><path d="M14 1V7H20" fill="none" stroke="#fff" stroke-width="1.8"/></svg>
 <div class="a" style="left:395px;top:522px;width:1px;height:26px;background:#5a5a5a"></div>
 <svg class="a" style="left:413px;top:522px" width="19" height="26" viewBox="0 0 19 26"><path d="M1.5 0V6.5H17.5V0" fill="none" stroke="#2ab5ef" stroke-width="2"/><path d="M1.5 25V10.5H11L17.5 16.5V25" fill="none" stroke="#2ab5ef" stroke-width="2"/><path d="M11 10.5V16.5H17.5" fill="none" stroke="#2ab5ef" stroke-width="1.6"/><path d="M4.5 21.5H14.5M4.5 21.5L7 19.3M4.5 21.5L7 23.7M14.5 21.5L12 19.3M14.5 21.5L12 23.7" fill="none" stroke="#2ab5ef" stroke-width="1.5"/></svg>
 <svg class="a" style="left:452px;top:522px" width="20" height="25" viewBox="0 0 20 25"><path d="M1.5 1.5H12.5L18.5 7.5V23.5H1.5Z" fill="none" stroke="#fff" stroke-width="2" stroke-linejoin="round"/><path d="M12.5 1.5V7.5H18.5" fill="none" stroke="#fff" stroke-width="1.6"/><path d="M10 9V19M5 14H15M10 9L8.3 10.8M10 9L11.7 10.8M10 19L8.3 17.2M10 19L11.7 17.2M5 14L6.8 12.3M5 14L6.8 15.7M15 14L13.2 12.3M15 14L13.2 15.7" fill="none" stroke="#fff" stroke-width="1.3"/></svg>
 <svg class="a" style="left:490px;top:522px" width="22" height="25" viewBox="0 0 22 25"><rect x="1.5" y="2.5" width="19" height="20" fill="none" stroke="#fff" stroke-width="2"/><path d="M5 18.5L10 13.5M5 18.5V14.5M5 18.5H9M17 6.5L12 11.5M17 6.5V10.5M17 6.5H13" fill="none" stroke="#fff" stroke-width="2.2"/></svg>
 <div class="a" style="left:528px;top:522px;width:1px;height:26px;background:#5a5a5a"></div>
 <svg class="a" style="left:545px;top:523px" width="23" height="23" viewBox="0 0 23 23"><rect x="1" y="13" width="21" height="8" rx="2" fill="none" stroke="#fff" stroke-width="2"/><path d="M11.5 11V1.5M7.5 5.5L11.5 1.5L15.5 5.5" fill="none" stroke="#fff" stroke-width="2"/><g fill="#fff"><rect x="5" y="16" width="2" height="2"/><rect x="9" y="16" width="2" height="2"/><rect x="13" y="16" width="2" height="2"/><rect x="17" y="16" width="2" height="2"/></g></svg>

</div>

</body></html>
